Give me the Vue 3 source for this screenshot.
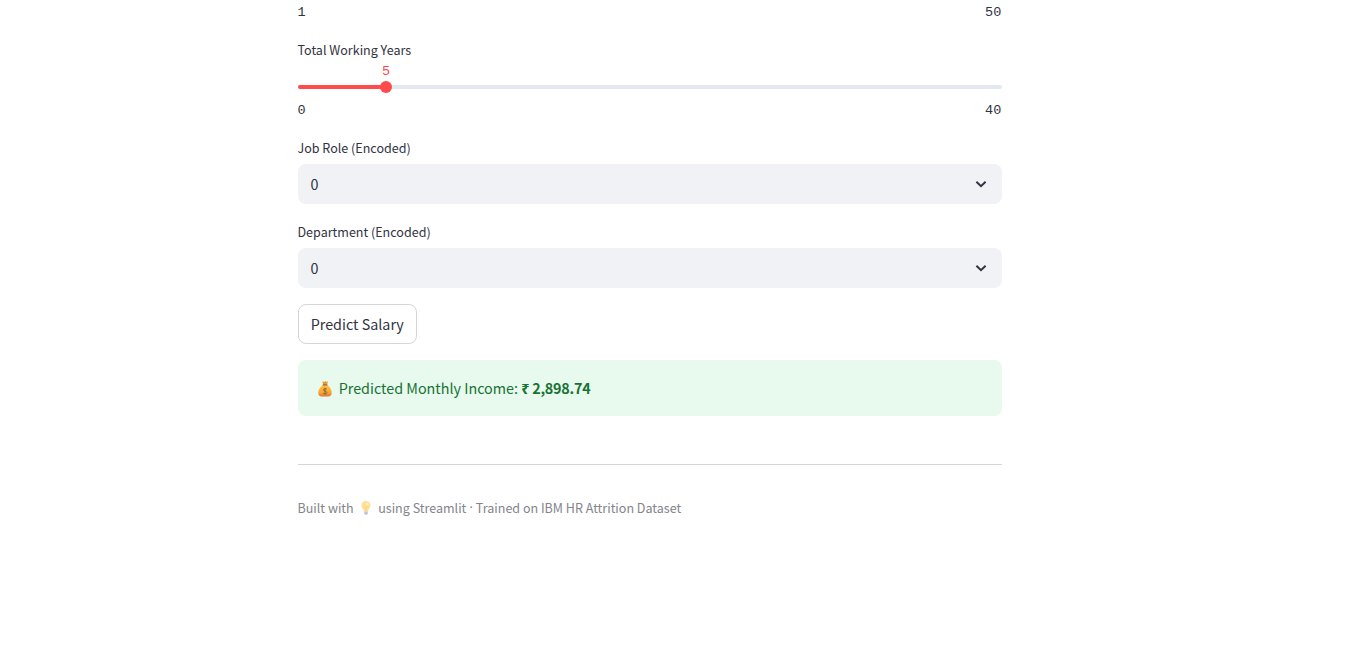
<script setup>
import { ref } from 'vue'

const years = ref({ label: 'Total Working Years', value: 5, min: 0, max: 40 })
const selects = [
  { label: 'Job Role (Encoded)', value: '0' },
  { label: 'Department (Encoded)', value: '0' },
]
</script>

<template>
  <main class="page">
    <div class="range first"><span>1</span><span>50</span></div>

    <section class="slider">
      <div class="label">{{ years.label }}</div>
      <div class="track">
        <div class="fill" :style="{ width: (years.value / years.max) * 100 + '%' }">
          <div class="thumb"><span class="value">{{ years.value }}</span></div>
        </div>
      </div>
      <div class="range"><span>{{ years.min }}</span><span>{{ years.max }}</span></div>
    </section>

    <section v-for="s in selects" :key="s.label" class="field">
      <div class="label">{{ s.label }}</div>
      <div class="select">
        <span>{{ s.value }}</span>
        <svg class="chevron" viewBox="0 0 18 18" width="18" height="18" aria-hidden="true">
          <path d="M4.400 6.700L9 11.100l4.600-4.400" />
        </svg>
      </div>
    </section>

    <button class="button" type="button">Predict Salary</button>

    <div class="alert">
      <svg class="bag" viewBox="0 0 16 18" width="16" height="18" aria-hidden="true">
        <defs>
          <linearGradient id="bagFill" x1="0" y1="0" x2="0" y2="1">
            <stop offset="0" stop-color="#ffc23c" />
            <stop offset=".65" stop-color="#f8a633" />
            <stop offset="1" stop-color="#dc7644" />
          </linearGradient>
        </defs>
        <path d="M5.300 1.300l2 .6 1-.8 1 .8 1.700-.6-1 3.400H6.200z" fill="#e89632" />
        <path d="M6 5h4.200c2.600 1.800 4.500 4.700 4.500 7.700 0 2.600-1.300 3.800-3.400 3.800H4.700c-2.200 0-3.500-1.200-3.500-3.800C1.200 9.700 3.400 6.800 6 5z" fill="url(#bagFill)" />
        <path d="M5.700 4.900h4.700" stroke="#a6593c" stroke-width="1.200" />
        <path d="M9.800 9.200C8.900 8.200 6.300 8.500 6.400 9.900c.1 1.500 3.400 1 3.400 2.700 0 1.500-2.600 1.700-3.600.6M8 7.700v6.700" fill="none" stroke="#85603c" stroke-width=".9" />
      </svg>
      <span class="message">Predicted Monthly Income: <strong>₹ 2,898.74</strong></span>
    </div>

    <hr class="divider" />

    <footer class="caption">
      <span class="built">Built with</span>
      <svg class="bulb" viewBox="0 0 12 16" width="12" height="16" aria-hidden="true">
        <path d="M6 1C3.200 1 1.500 3 1.500 5.400c0 2.600 2.300 3.400 2.600 6.100h3.800c.3-2.700 2.600-3.500 2.600-6.100C10.500 3 8.800 1 6 1z" fill="#ffdf91" />
        <path d="M4.800 6.500L6 8l1.200-1.500M6 8v3" fill="none" stroke="#ffc978" stroke-width=".8" />
        <ellipse cx="7.200" cy="3.900" rx="1.500" ry="1.700" fill="#fff2bd" />
        <path d="M4.200 11.500h3.600v2.200L7 14.700H5l-.8-1z" fill="#c9c2d3" />
      </svg>
      <span>using Streamlit</span>
      <span class="dot">·</span>
      <span>Trained on IBM HR Attrition Dataset</span>
    </footer>
  </main>
</template>

<style>
body {
  background: #fff;
  overflow: hidden;
}
</style>

<style scoped>
.page {
  width: 704px;
  height: 661px;
  margin-left: 298px;
  color: #31333f;
  font-family: "Noto Sans CJK SC", "Noto Sans", sans-serif;
  font-size: 14.33px;
  line-height: 24px;
}
.range {
  display: flex;
  justify-content: space-between;
  height: 20px;
  margin: 0 .5px 0 -.5px;
  font: 13.5px/22px "Liberation Mono", monospace;
  letter-spacing: .2px;
}
.first { padding-top: 2px; }
.slider { padding-top: 18px; }
.label {
  height: 20px;
  margin-left: -.5px;
  font-size: 12.54px;
  line-height: 20px;
  white-space: nowrap;
}
.track {
  height: 4px;
  margin: 25px 0 11px;
  border-radius: 4px;
  background: #e4e8f0;
}
.fill {
  position: relative;
  height: 4px;
  border-radius: 4px;
  background: #ff4b4b;
}
.thumb {
  position: absolute;
  right: -6px;
  top: -4px;
  width: 12px;
  height: 12px;
  border-radius: 50%;
  background: #ff4b4b;
}
.value {
  position: absolute;
  left: 2px;
  bottom: 11px;
  color: #ff4b4b;
  font: 13.5px/20px "Liberation Mono", monospace;
}
.field { padding-top: 18px; }
.select {
  display: flex;
  align-items: center;
  justify-content: space-between;
  box-sizing: border-box;
  height: 40px;
  margin-top: 6px;
  padding: 0 12px 0 12.5px;
  border-radius: 8px;
  background: #f0f2f6;
}
.chevron path {
  fill: none;
  stroke: #31333f;
  stroke-width: 2;
}
.button {
  display: block;
  box-sizing: border-box;
  width: 119px;
  height: 40px;
  margin: 16px 0;
  padding: 0 .5px 0 0;
  border: 1px solid #d6d6d9;
  border-radius: 8px;
  background: #fff;
  color: inherit;
  font: inherit;
  white-space: nowrap;
}
.alert {
  display: flex;
  align-items: center;
  box-sizing: border-box;
  height: 56px;
  padding: 0 16px 0 19px;
  border-radius: 8px;
  background: #e8f9ee;
  color: #177233;
}
.bag { margin-top: 2px; }
.message {
  margin-left: 5.700px;
  white-space: pre;
}
.message strong {
  font-weight: 700;
  letter-spacing: -.22px;
}
.divider {
  height: 1px;
  margin: 48px 0 32px;
  border: 0;
  background: #d6d6d9;
}
.caption {
  display: flex;
  align-items: center;
  height: 21px;
  margin-left: -.5px;
  color: #83848c;
  font-size: 12.54px;
  line-height: 21px;
  white-space: nowrap;
}
.bulb { margin: 0 6.500px 0 6px; }
.dot {
  width: 9.500px;
  font-family: "Noto Sans", sans-serif;
  text-align: center;
}
</style>
